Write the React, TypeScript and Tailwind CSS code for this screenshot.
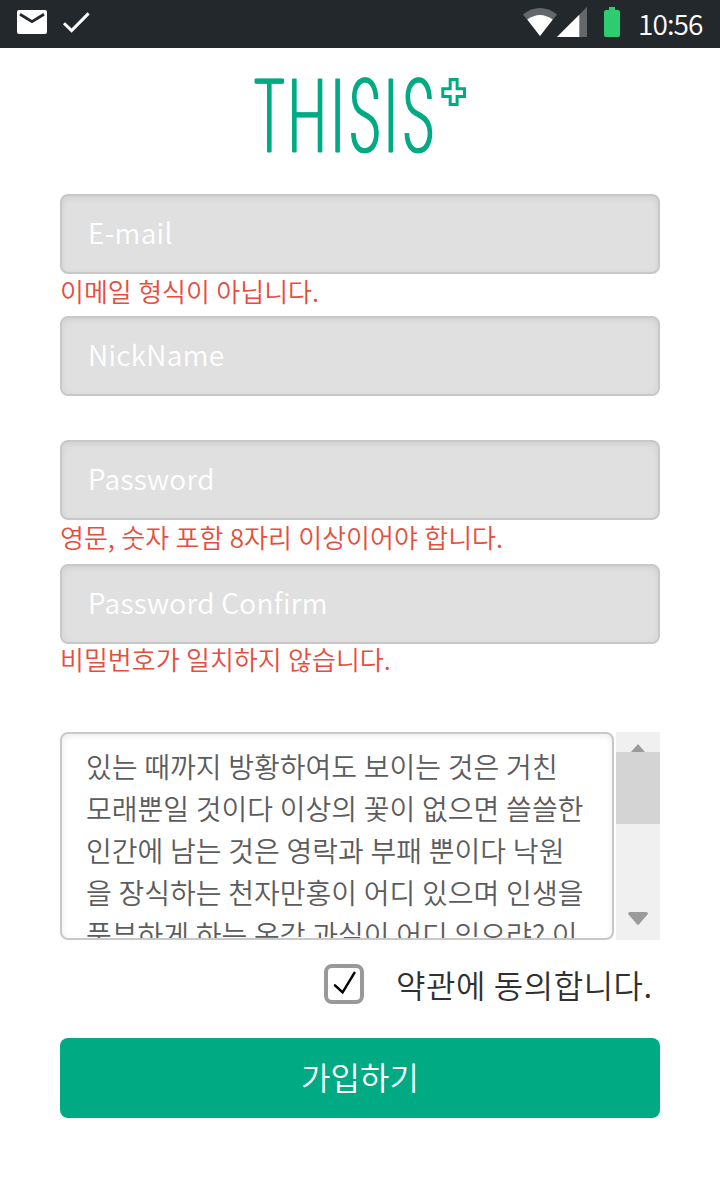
const GREEN = '#00ab84';

const TERMS = [
  '있는 때까지 방황하여도 보이는 것은 거친',
  '모래뿐일 것이다 이상의 꽃이 없으면 쓸쓸한',
  '인간에 남는 것은 영락과 부패 뿐이다 낙원',
  '을 장식하는 천자만홍이 어디 있으며 인생을',
  '풍부하게 하는 온갖 과실이 어디 있으랴? 이',
];

function StatusBar() {
  return (
    <header className="flex h-12 items-center justify-between bg-[#23282c]">
      <svg className="h-12 w-24" viewBox="0 0 96 48">
        <rect x="17" y="10" width="30" height="24" rx="2" fill="#fff" />
        <path d="M20 14.2 32 21.7 44 14.2" fill="none" stroke="#23282c" strokeWidth="2.8" />
        <path d="M64 23.2 71.6 30.6 88.6 13.4" fill="none" stroke="#fff" strokeWidth="3" />
      </svg>
      <div className="flex items-center">
        <svg className="h-12 w-[104px]" viewBox="520 0 104 48">
          <path d="M523 14.4Q540 1.8 557 14.4L540 36Z" fill="#64686b" />
          <path d="M527.3 19.6Q540 10.4 552.7 19.6L540 36Z" fill="#fff" />
          <path d="M587 7V37H557Z" fill="#64686b" />
          <path d="M579.3 14.7V37H557Z" fill="#fff" />
          <path d="M609 7h6v3h3q2 0 2 2v23q0 2-2 2h-12q-2 0-2-2V12q0-2 2-2h3Z" fill="#2ecc71" />
        </svg>
        <span className="-mt-0.5 ml-3.5 w-[82px] text-[28px] leading-[46px] tracking-[-0.9px] text-white">10:56</span>
      </div>
    </header>
  );
}

function Logo() {
  return (
    <svg className="mx-auto block h-[146px] w-[240px]" viewBox="240 48 240 146" role="img" aria-label="THISIS+">
      <filter id="widen" filterUnits="userSpaceOnUse" x="240" y="48" width="240" height="146" colorInterpolationFilters="sRGB">
        <feOffset in="SourceGraphic" dx="-1" result="a" />
        <feOffset in="SourceGraphic" dx="1" result="b" />
        <feMerge>
          <feMergeNode in="a" />
          <feMergeNode in="SourceGraphic" />
          <feMergeNode in="b" />
        </feMerge>
      </filter>
      <g filter="url(#widen)">
        <text
          transform="translate(0 150.6) scale(.54 1)"
          x="498.7 569 625 676 724 775"
          y="0"
          textAnchor="middle"
          fontSize="98"
          fill={GREEN}
          stroke={GREEN}
          strokeWidth="2.6"
          strokeLinejoin="miter"
          strokeMiterlimit="10"
          className="font-['Inter'] font-thin"
        >
          THISIS
        </text>
      </g>
      <path
        d="M450.2 79.5h6.9v9.2h7.4v7.8h-7.4v8h-6.9v-8h-7.4v-7.8h7.4Z"
        fill="none"
        stroke={GREEN}
        strokeWidth="3"
      />
    </svg>
  );
}

function Field({ label, error, gap, lead }: { label: string; error?: string; gap: string; lead: string }) {
  return (
    <div className={gap}>
      <input
        aria-label={label}
        placeholder={label}
        className="block h-20 w-full rounded-lg border-2 border-[#c8c8c8] bg-[#e0e0e0] px-[26px] pb-1 text-[28px] font-[350] tracking-[0.32px] shadow-[inset_0_2px_6px_rgba(0,0,0,0.08)] outline-none placeholder:text-white"
      />
      {error && <p className={`text-[26px] [word-spacing:0.6px] whitespace-nowrap text-[#e74c3c] ${lead}`}>{error}</p>}
    </div>
  );
}

function Terms() {
  return (
    <section className="flex h-[208px] gap-0.5">
      <div className="w-[554px] overflow-hidden rounded-lg border-2 border-[#c8c8c8] pt-[11px] pl-6 text-[28px] leading-[42px] [word-spacing:0.5px] whitespace-nowrap text-[#5c5c5c] shadow-[inset_0_2px_6px_rgba(0,0,0,0.08)]">
        {TERMS.map((line) => (
          <p key={line}>{line}</p>
        ))}
      </div>
      <div className="flex w-11 flex-col items-center bg-[#f0f0f0]">
        <div className="flex h-5 items-end">
          <svg className="block h-2 w-4" viewBox="0 0 16 8">
            <path d="M1 8 8 0l7 8Z" fill="#9b9b9b" />
          </svg>
        </div>
        <div className="h-[72px] w-full bg-[#d4d4d4]" />
        <svg className="mt-[88px] block h-[13px] w-5" viewBox="0 0 20 13">
          <path d="M1.5 0h17q2 .6 1 2.4L10.8 12.5q-.8.8-1.6 0L.5 2.4Q-.5.6 1.5 0Z" fill="#9b9b9b" />
        </svg>
      </div>
    </section>
  );
}

export default function App() {
  return (
    <main className="flex h-[1200px] w-[720px] flex-col overflow-hidden bg-white font-['Noto_Sans_CJK_KR',sans-serif] font-[350]">
      <StatusBar />
      <Logo />
      <form className="flex flex-col px-[60px]">
        <Field label="E-mail" error="이메일 형식이 아닙니다." gap="h-[122px]" lead="leading-[34px]" />
        <Field label="NickName" gap="h-[124px]" lead="" />
        <Field label="Password" error="영문, 숫자 포함 8자리 이상이어야 합니다." gap="h-[124px]" lead="leading-[34px]" />
        <Field label="Password Confirm" error="비밀번호가 일치하지 않습니다." gap="h-[168px]" lead="leading-[30px]" />
        <Terms />
        <label className="mt-6 flex h-10 items-center text-[32px] leading-10 tracking-[0.55px] whitespace-nowrap text-[#303030]">
          <span className="mr-8 ml-[264px] flex size-10 shrink-0 items-center justify-center rounded-lg border-4 border-[#999]">
            <svg className="size-8 shrink-0" viewBox="0 0 32 32">
              <path d="M7 17.4 14.6 24.4 26.4 4.8" fill="none" stroke="#000" strokeWidth="2.5" strokeLinecap="round" />
            </svg>
          </span>
          약관에 동의합니다.
        </label>
        <button type="button" className="mt-[34px] h-20 rounded-lg bg-[#00ab84] pb-1 text-[32px] text-white">
          가입하기
        </button>
      </form>
    </main>
  );
}
